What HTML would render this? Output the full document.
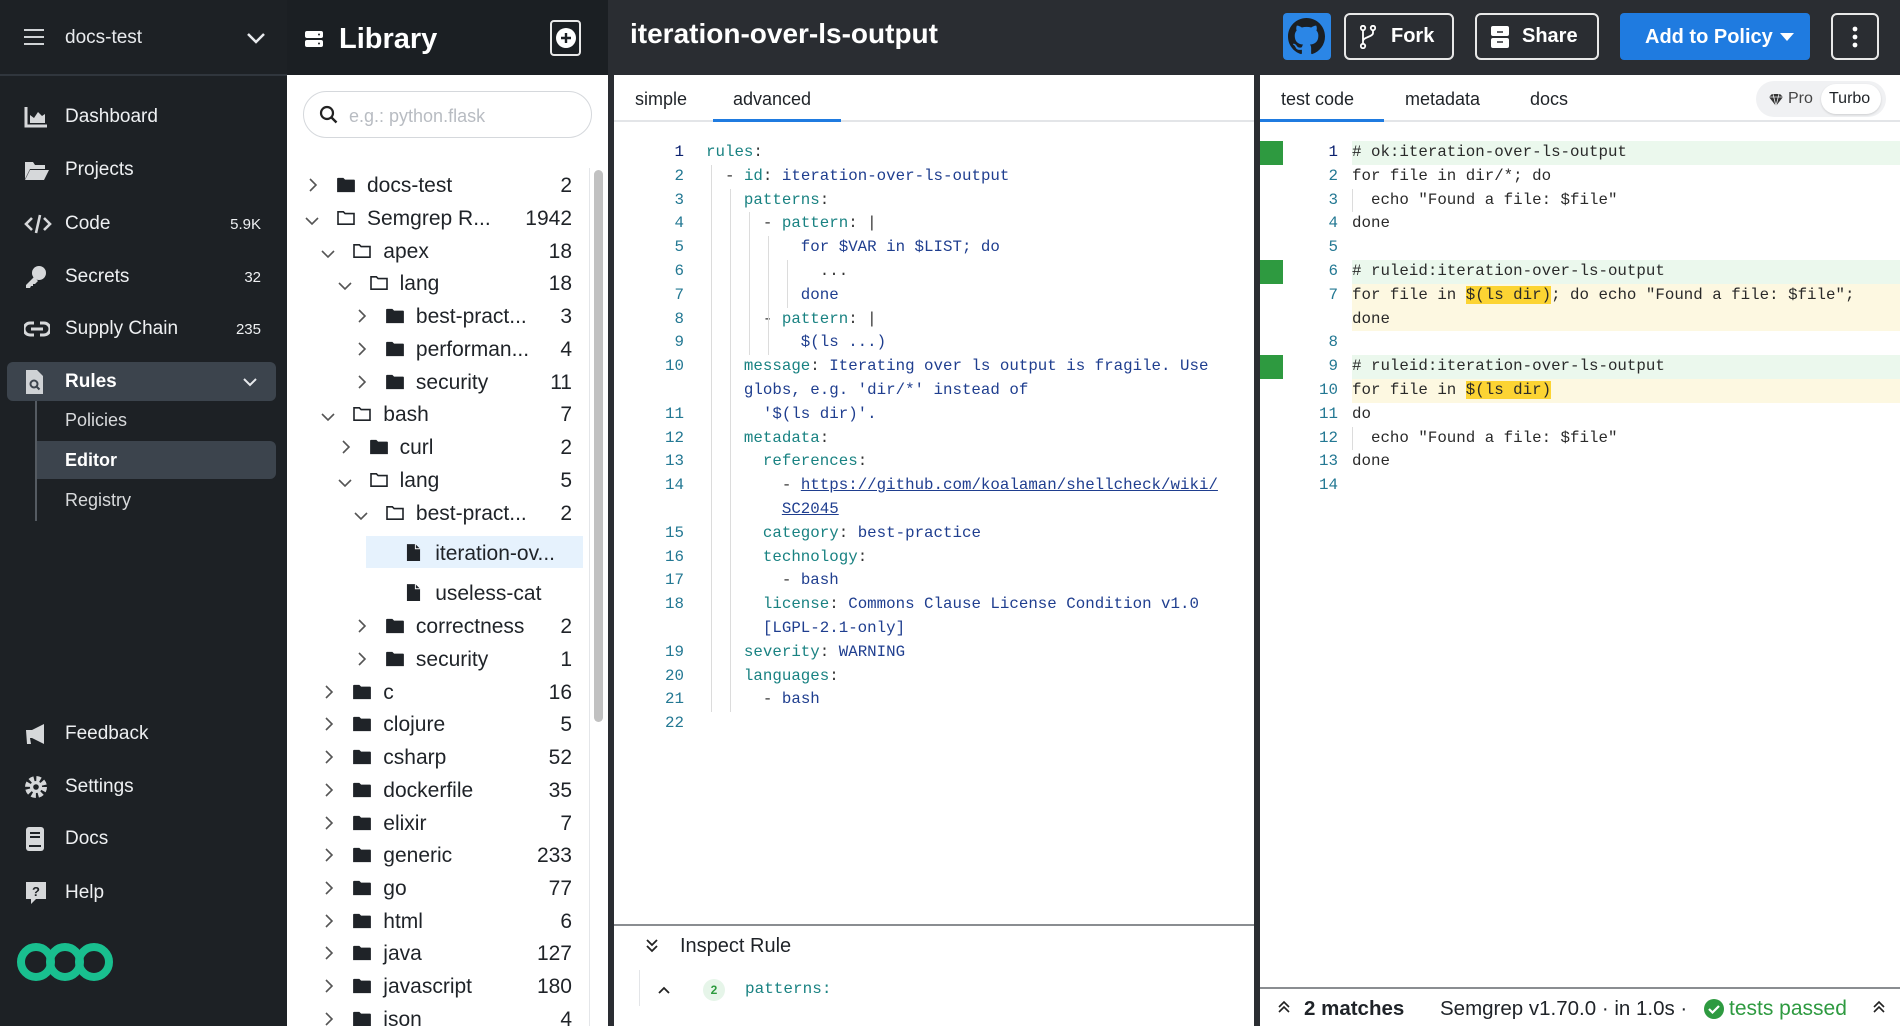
<!DOCTYPE html>
<html><head><meta charset="utf-8">
<style>
*{box-sizing:border-box;margin:0;padding:0}
html{width:1900px;height:1026px;overflow:hidden}
body{width:1900px;height:1026px;overflow:hidden;position:relative;font-family:"Liberation Sans",sans-serif;background:#fff}
.abs{position:absolute}
#side{left:0;top:0;width:287px;height:1026px;background:#1d2125;color:#e8eaed}
.nav{position:absolute;left:0;width:287px;height:40px;display:flex;align-items:center;font-size:19px;color:#eef0f2}
.nav svg{position:absolute;left:24px}
.nav .t{position:absolute;left:65px}
.nav .c{position:absolute;right:26px;font-size:15px}
#lib{left:287px;top:0;width:321px;height:1026px;background:#fff}
#top{left:608px;top:0;width:1292px;height:75px;background:#2a2d32}
.btn{position:absolute;top:13px;height:47px;border:2px solid #e8e8e8;border-radius:6px;color:#fff;font-size:20px;font-weight:bold;display:flex;align-items:center}
.code{font-family:"Liberation Mono",monospace;font-size:15.8px;white-space:pre}
.ln{position:absolute;height:23.8px;line-height:23.8px;width:100%}
.ln .num{position:absolute;text-align:right;width:40px;color:#237893}
.k{color:#198282}.v{color:#1f3e8f}.p{color:#333}
.hl{background:#fcd433}
</style></head><body>

<div id="side" class="abs">
 <div class="abs" style="left:0;top:74px;width:287px;height:2px;background:#30363d"></div>
 <svg class="abs" style="left:23px;top:28px" width="22" height="18" viewBox="0 0 22 18"><path d="M1 2h20M1 9h20M1 16h20" stroke="#d0d3d6" stroke-width="2"/></svg>
 <div class="abs" style="left:65px;top:27px;font-size:19px;color:#e8eaed">docs-test</div>
 <svg class="abs" style="left:246px;top:32px" width="20" height="12" viewBox="0 0 20 12"><path d="M2 2l8 8 8-8" stroke="#e8eaed" stroke-width="2.5" fill="none"/></svg>

 <div class="nav" style="top:97px"><svg width="24" height="22" viewBox="0 0 24 22"><path d="M2 1v19h21" stroke="#d6d8da" stroke-width="3" fill="none"/><path d="M6 17V9l4 3 4-6 4 4 3-2v9z" fill="#d6d8da"/></svg><span class="t">Dashboard</span></div>
 <div class="nav" style="top:150px"><svg width="26" height="22" viewBox="0 0 26 22"><path d="M1 3h8l2 3h10v4H6L1 20z" fill="#d6d8da"/><path d="M6 11h19l-5 10H1z" fill="#d6d8da"/></svg><span class="t">Projects</span></div>
 <div class="nav" style="top:204px"><svg width="28" height="22" viewBox="0 0 28 22"><path d="M8 5L2 11l6 6M20 5l6 6-6 6M16 2l-4 18" stroke="#d6d8da" stroke-width="2.6" fill="none"/></svg><span class="t">Code</span><span class="c">5.9K</span></div>
 <div class="nav" style="top:257px"><svg width="24" height="24" viewBox="0 0 24 24"><circle cx="15" cy="8" r="7" fill="#d6d8da"/><path d="M10 12L2 20v3h4l1-2h2v-2h2l3-3z" fill="#d6d8da"/></svg><span class="t">Secrets</span><span class="c">32</span></div>
 <div class="nav" style="top:309px"><svg width="26" height="16" viewBox="0 0 26 16"><path d="M10 2H6a6 6 0 000 12h4M16 2h4a6 6 0 010 12h-4M7 8h12" stroke="#d6d8da" stroke-width="3" fill="none"/></svg><span class="t">Supply Chain</span><span class="c">235</span></div>
 <div class="abs" style="left:7px;top:362px;width:269px;height:39px;background:#3c444d;border-radius:6px"></div>
 <div class="nav" style="top:362px"><svg width="20" height="26" viewBox="0 0 20 26"><path d="M2 1h11l6 6v18H2z" fill="#cfd2d5"/><circle cx="10" cy="15" r="3.5" stroke="#3c444d" stroke-width="2" fill="none"/><path d="M12.5 17.5l3 3" stroke="#3c444d" stroke-width="2"/></svg><span class="t" style="font-weight:bold;color:#fff">Rules</span></div>
 <svg class="abs" style="left:242px;top:377px" width="16" height="10" viewBox="0 0 16 10"><path d="M2 2l6 6 6-6" stroke="#e8eaed" stroke-width="2" fill="none"/></svg>
 <div class="abs" style="left:35px;top:401px;width:2px;height:120px;background:#555b62"></div>
 <div class="abs" style="left:37px;top:441px;width:239px;height:38px;background:#3c444d;border-radius:0 6px 6px 0"></div>
 <div class="abs" style="left:65px;top:410px;font-size:18px;color:#d8dadc">Policies</div>
 <div class="abs" style="left:65px;top:450px;font-size:18px;color:#fff;font-weight:bold">Editor</div>
 <div class="abs" style="left:65px;top:490px;font-size:18px;color:#d8dadc">Registry</div>

 <div class="nav" style="top:714px"><svg width="24" height="24" viewBox="0 0 24 24"><path d="M2 8h6l12-6v20L8 16H6l1 6H3z" fill="#d6d8da"/></svg><span class="t">Feedback</span></div>
 <div class="nav" style="top:767px"><svg width="24" height="24" viewBox="0 0 24 24"><circle cx="12" cy="12" r="8" fill="none" stroke="#d6d8da" stroke-width="6" stroke-dasharray="4 2.3"/><circle cx="12" cy="12" r="6" fill="#d6d8da"/><circle cx="12" cy="12" r="2.8" fill="#1d2125"/></svg><span class="t">Settings</span></div>
 <div class="nav" style="top:819px"><svg width="22" height="26" viewBox="0 0 22 26"><rect x="2" y="1" width="18" height="24" rx="3" fill="#d6d8da"/><path d="M6 7h10M6 11h10M5 20h12" stroke="#1d2125" stroke-width="2"/></svg><span class="t">Docs</span></div>
 <div class="nav" style="top:873px"><svg width="24" height="26" viewBox="0 0 24 26"><path d="M2 2h20v17H12l-5 5v-5H2z" fill="#d6d8da"/><text x="8" y="16" font-size="13" font-weight="bold" fill="#1d2125" font-family="Liberation Sans">?</text></svg><span class="t">Help</span></div>
 <svg class="abs" style="left:16px;top:940px" width="98" height="44" viewBox="0 0 98 44"><g fill="none" stroke="#19bf8f" stroke-width="8"><circle cx="20" cy="22" r="15"/><circle cx="49" cy="22" r="15"/><circle cx="78" cy="22" r="15"/></g></svg>
</div>

<div id="lib" class="abs">
 <div class="abs" style="left:0;top:0;width:321px;height:75px;background:#1b1f23"></div>
 <svg class="abs" style="left:18px;top:31px" width="18" height="16" viewBox="0 0 18 16"><rect x="0" y="0" width="18" height="7" rx="2" fill="#fff"/><rect x="0" y="9" width="18" height="7" rx="2" fill="#fff"/><circle cx="14" cy="3.5" r="1" fill="#1b1f23"/><circle cx="14" cy="12.5" r="1" fill="#1b1f23"/></svg>
 <div class="abs" style="left:52px;top:23px;font-size:29px;font-weight:bold;color:#fff">Library</div>
 <div class="abs" style="left:263px;top:20px;width:31px;height:36px;border:2px solid #e8e8e8;border-radius:4px"></div>
 <svg class="abs" style="left:268px;top:27px" width="22" height="22" viewBox="0 0 22 22"><circle cx="11" cy="11" r="10" fill="#fff"/><path d="M11 6v10M6 11h10" stroke="#1b1f23" stroke-width="2.4"/></svg>
 <div class="abs" style="left:16px;top:91px;width:289px;height:47px;border:1.5px solid #d5d8dc;border-radius:24px"></div>
 <svg class="abs" style="left:32px;top:105px" width="20" height="20" viewBox="0 0 20 20"><circle cx="8" cy="8" r="6" stroke="#222" stroke-width="2.2" fill="none"/><path d="M12.5 12.5l5 5" stroke="#222" stroke-width="2.4"/></svg>
 <div class="abs" style="left:62px;top:106px;font-size:18px;color:#b8bcc2">e.g.: python.flask</div>
 <div class="abs" style="left:302px;top:168px;width:1px;height:858px;background:#e4e6e9"></div>
 <div class="abs" style="left:307px;top:170px;width:9px;height:552px;background:#c1c1c1;border-radius:5px"></div>
 <div class="abs" style="left:79px;top:536px;width:217px;height:32px;background:#e6f2fd"></div>
</div>
<div id="tree" class="abs" style="left:287px;top:0;width:321px;height:1026px;overflow:hidden">
</div>

<div id="top" class="abs">
 <div class="abs" style="left:22px;top:18px;font-size:28px;font-weight:bold;color:#fff">iteration-over-ls-output</div>
</div>
<div class="abs" style="left:1283px;top:13px;width:48px;height:47px;background:#2b86e6;border-radius:4px"></div>
<svg class="abs" style="left:1288px;top:18px" width="37" height="37" viewBox="0 0 16 16"><path fill="#1b1f23" d="M8 0C3.58 0 0 3.58 0 8c0 3.540 2.29 6.53 5.47 7.59.4.07.55-.17.55-.38 0-.19-.01-.82-.01-1.49-2.01.37-2.530-.49-2.690-.94-.09-.23-.48-.94-.82-1.130-.28-.15-.68-.52-.01-.53.63-.01 1.08.58 1.23.82.72 1.21 1.87.87 2.33.66.07-.52.28-.87.51-1.07-1.78-.2-3.64-.89-3.64-3.950 0-.87.31-1.59.82-2.15-.08-.2-.36-1.02.08-2.12 0 0 .67-.21 2.2.82.64-.18 1.32-.27 2-.27.68 0 1.36.09 2 .27 1.53-1.04 2.2-.82 2.2-.82.44 1.1.16 1.92.08 2.12.51.56.82 1.27.82 2.15 0 3.07-1.87 3.75-3.65 3.95.29.25.54.73.54 1.48 0 1.07-.01 1.93-.01 2.2 0 .21.15.46.55.38A8.013 8.013 0 0016 8c0-4.42-3.58-8-8-8z"/></svg>
<div class="btn" style="left:1344px;width:110px"><svg style="position:absolute;left:14px" width="16" height="24" viewBox="0 0 16 24"><circle cx="3" cy="3" r="2.2" stroke="#fff" stroke-width="1.8" fill="none"/><circle cx="13" cy="3" r="2.2" stroke="#fff" stroke-width="1.8" fill="none"/><circle cx="3" cy="21" r="2.2" stroke="#fff" stroke-width="1.8" fill="none"/><path d="M3 5v14M13 5v3c0 4-10 4-10 8" stroke="#fff" stroke-width="1.8" fill="none"/></svg><span style="position:absolute;left:45px">Fork</span></div>
<div class="btn" style="left:1475px;width:124px"><svg style="position:absolute;left:14px" width="18" height="24" viewBox="0 0 18 24"><rect x="0" y="1" width="18" height="10" rx="2" fill="#fff"/><rect x="0" y="13" width="18" height="10" rx="2" fill="#fff"/><path d="M6 7h6M6 17h6" stroke="#2a2d32" stroke-width="1.6"/></svg><span style="position:absolute;left:45px">Share</span></div>
<div class="abs" style="left:1620px;top:13px;width:190px;height:47px;background:#1f7be0;border-radius:4px;color:#fff;font-size:20px;font-weight:bold"><span style="position:absolute;left:25px;top:13px">Add to Policy</span><svg style="position:absolute;left:160px;top:20px" width="14" height="9" viewBox="0 0 14 9"><path d="M0 0h14L7 8z" fill="#fff"/></svg></div>
<div class="btn" style="left:1831px;width:48px"><svg style="position:absolute;left:19px" width="6" height="22" viewBox="0 0 6 22"><circle cx="3" cy="3" r="2.4" fill="#fff"/><circle cx="3" cy="11" r="2.4" fill="#fff"/><circle cx="3" cy="19" r="2.4" fill="#fff"/></svg></div>

<div class="abs" style="left:608px;top:75px;width:6px;height:951px;background:#2a2d32"></div>
<div class="abs" style="left:1254px;top:75px;width:6px;height:951px;background:#2a2d32"></div>

<div class="abs" style="left:614px;top:75px;width:640px;height:951px;background:#fff;overflow:hidden">
 <div class="abs" style="left:21px;top:14px;font-size:18px;color:#1f2328">simple</div>
 <div class="abs" style="left:119px;top:14px;font-size:18px;color:#1f2328">advanced</div>
 <div class="abs" style="left:0;top:45px;width:640px;height:2px;background:#e3e5e8"></div>
 <div class="abs" style="left:99px;top:44px;width:128px;height:3px;background:#1f7be0"></div>
 <div id="mid" class="abs code" style="left:0;top:66px;width:640px"></div>
 <div class="abs" style="left:0;top:849px;width:640px;height:2px;background:#8a8d91"></div>
 <svg class="abs" style="left:31px;top:863px" width="14" height="16" viewBox="0 0 14 16"><path d="M2 2l5 5 5-5M2 8l5 5 5-5" stroke="#222" stroke-width="1.8" fill="none"/></svg>
 <div class="abs" style="left:66px;top:860px;font-size:20px;color:#1f2328">Inspect Rule</div>
 <div class="abs" style="left:25px;top:895px;width:1px;height:36px;background:#e3e5e8"></div>
 <svg class="abs" style="left:43px;top:911px" width="14" height="9" viewBox="0 0 14 9"><path d="M2 7l5-5 5 5" stroke="#222" stroke-width="1.8" fill="none"/></svg>
 <div class="abs" style="left:89px;top:904px;width:22px;height:22px;border-radius:11px;background:#e6f5e9;color:#2c9a3e;font-size:12px;font-weight:bold;text-align:center;line-height:22px">2</div>
 <div class="abs code" style="left:131px;top:905px;color:#198282;font-size:16px">patterns:</div>
</div>

<div class="abs" style="left:1260px;top:75px;width:640px;height:951px;background:#fff;overflow:hidden">
 <div class="abs" style="left:21px;top:14px;font-size:18px;color:#1f2328">test code</div>
 <div class="abs" style="left:145px;top:14px;font-size:18px;color:#1f2328">metadata</div>
 <div class="abs" style="left:270px;top:14px;font-size:18px;color:#1f2328">docs</div>
 <div class="abs" style="left:0;top:45px;width:640px;height:2px;background:#e3e5e8"></div>
 <div class="abs" style="left:0;top:44px;width:124px;height:3px;background:#1f7be0"></div>
 <div class="abs" style="left:496px;top:6px;width:130px;height:36px;background:#f0f1f3;border-radius:18px"></div>
 <div class="abs" style="left:561px;top:9px;width:60px;height:30px;background:#fff;border-radius:15px;box-shadow:0 1px 2px rgba(0,0,0,.15)"></div>
 <svg class="abs" style="left:508px;top:18px" width="16" height="14" viewBox="0 0 16 14"><path d="M1 4l3-3h8l3 3-7 9z" fill="#333"/><path d="M1 4h14M5 1l3 12 3-12" stroke="#f0f1f3" stroke-width="0.8" fill="none"/></svg>
 <div class="abs" style="left:528px;top:15px;font-size:16px;color:#444">Pro</div>
 <div class="abs" style="left:569px;top:15px;font-size:16px;color:#1f2328">Turbo</div>
 <div id="rt" class="abs code" style="left:0;top:66px;width:640px"></div>
 <div class="abs" style="left:0;top:912px;width:640px;height:2px;background:#8a8d91"></div>
 <svg class="abs" style="left:17px;top:925px" width="14" height="14" viewBox="0 0 14 14"><path d="M2 7l5-5 5 5M2 12l5-5 5 5" stroke="#222" stroke-width="1.6" fill="none"/></svg>
 <div class="abs" style="left:44px;top:922px;font-size:20.5px;font-weight:bold;color:#1f2328">2 matches</div>
 <div class="abs" style="left:180px;top:922px;font-size:20.5px;color:#1f2328">Semgrep v1.70.0 · in 1.0s ·</div>
 <svg class="abs" style="left:444px;top:924px" width="20" height="20" viewBox="0 0 20 20"><circle cx="10" cy="10" r="10" fill="#2e9a40"/><path d="M5 10l3.5 3.5L15 7" stroke="#fff" stroke-width="2.2" fill="none"/></svg>
 <div class="abs" style="left:469px;top:922px;font-size:21px;color:#2e9a40">tests passed</div>
 <svg class="abs" style="left:612px;top:925px" width="14" height="14" viewBox="0 0 14 14"><path d="M2 7l5-5 5 5M2 12l5-5 5 5" stroke="#222" stroke-width="1.6" fill="none"/></svg>
</div>

<script>
const FF='<svg width="18" height="16" viewBox="0 0 20 18"><path d="M0 2a1 1 0 011-1h6l2 2h10a1 1 0 011 1v13H0z" fill="#1f2328"/></svg>';
const FO='<svg width="18" height="16" viewBox="0 0 20 18"><path d="M1 2h6l2 2h10v12H1z" stroke="#1f2328" stroke-width="1.8" fill="none"/></svg>';
const FI='<svg width="15" height="19" viewBox="0 0 16 20"><path d="M1 1h9l5 5v13H1z" fill="#1f2328"/><path d="M10 1v5h5" stroke="#fff" stroke-width="1" fill="none"/></svg>';
const CR='<svg width="10" height="16" viewBox="0 0 10 16"><path d="M2 2l6 6-6 6" stroke="#555" stroke-width="1.6" fill="none"/></svg>';
const CD='<svg width="16" height="10" viewBox="0 0 16 10"><path d="M2 2l6 6 6-6" stroke="#555" stroke-width="1.6" fill="none"/></svg>';
const rows=[
[184,0,'c','f','docs-test','2'],[217,0,'o','o','Semgrep R...','1942'],[250,1,'o','o','apex','18'],[282,2,'o','o','lang','18'],
[315,3,'c','f','best-pract...','3'],[348,3,'c','f','performan...','4'],[381,3,'c','f','security','11'],
[413,1,'o','o','bash','7'],[446,2,'c','f','curl','2'],[479,2,'o','o','lang','5'],[512,3,'o','o','best-pract...','2'],
[552,4,'n','i','iteration-ov...',''],[592,4,'n','i','useless-cat',''],[625,3,'c','f','correctness','2'],[658,3,'c','f','security','1'],
[691,1,'c','f','c','16'],[723,1,'c','f','clojure','5'],[756,1,'c','f','csharp','52'],[789,1,'c','f','dockerfile','35'],
[822,1,'c','f','elixir','7'],[854,1,'c','f','generic','233'],[887,1,'c','f','go','77'],[920,1,'c','f','html','6'],
[952,1,'c','f','java','127'],[985,1,'c','f','javascript','180'],[1018,1,'c','f','json','4']];
let h='';
for(const [y0,l,ch,ic,t,c] of rows){
 const y=y0+1;
 const x0=26+l*16.3;
 if(ch!=='n') h+=`<div class="abs" style="left:${ch==='c'?x0-5:x0-9}px;top:${y-(ch==='c'?8:5)}px">${ch==='c'?CR:CD}</div>`;
 const ix=x0+24;
 h+=`<div class="abs" style="left:${ic==='i'?ix+4:ix}px;top:${y-(ic==='i'?10:8)}px">${ic==='f'?FF:ic==='o'?FO:FI}</div>`;
 h+=`<div class="abs" style="left:${x0+(ic==='i'?57:54)}px;top:${y-11}px;font-size:21px;color:#1f2328;white-space:nowrap">${t}</div>`;
 if(c) h+=`<div class="abs" style="right:36px;top:${y-11}px;font-size:21px;color:#1f2328">${c}</div>`;
}
document.getElementById('tree').innerHTML=h;

const LH=23.8;
const M=[
['1','<span class="k">rules</span><span class="p">:</span>'],
['2','  <span class="p">-</span> <span class="k">id</span><span class="p">:</span> <span class="v">iteration-over-ls-output</span>'],
['3','    <span class="k">patterns</span><span class="p">:</span>'],
['4','      <span class="p">-</span> <span class="k">pattern</span><span class="p">: |</span>'],
['5','          <span class="v">for $VAR in $LIST; do</span>'],
['6','            <span class="p">...</span>'],
['7','          <span class="v">done</span>'],
['8','      <span class="p">-</span> <span class="k">pattern</span><span class="p">: |</span>'],
['9','          <span class="v">$(ls ...)</span>'],
['10','    <span class="k">message</span><span class="p">:</span> <span class="v">Iterating over ls output is fragile. Use</span>'],
['','    <span class="v">globs, e.g. \'dir/*\' instead of</span>'],
['11','      <span class="v">\'$(ls dir)\'.</span>'],
['12','    <span class="k">metadata</span><span class="p">:</span>'],
['13','      <span class="k">references</span><span class="p">:</span>'],
['14','        <span class="p">-</span> <span class="v" style="text-decoration:underline">https://github.com/koalaman/shellcheck/wiki/</span>'],
['','        <span class="v" style="text-decoration:underline">SC2045</span>'],
['15','      <span class="k">category</span><span class="p">:</span> <span class="v">best-practice</span>'],
['16','      <span class="k">technology</span><span class="p">:</span>'],
['17','        <span class="p">-</span> <span class="v">bash</span>'],
['18','      <span class="k">license</span><span class="p">:</span> <span class="v">Commons Clause License Condition v1.0</span>'],
['','      <span class="v">[LGPL-2.1-only]</span>'],
['19','    <span class="k">severity</span><span class="p">:</span> <span class="v">WARNING</span>'],
['20','    <span class="k">languages</span><span class="p">:</span>'],
['21','      <span class="p">-</span> <span class="v">bash</span>'],
['22','']];
h='';
M.forEach((r,i)=>{h+=`<div class="ln" style="top:${i*LH}px"><span class="num" style="left:30px;${r[0]==='1'?'color:#0b216f':''}">${r[0]}</span><span style="position:absolute;left:92px">${r[1]}</span></div>`});
[[97,1,23],[116,2,23],[135,3,8],[154,4,8],[173,5,6]].forEach(([x,a,b])=>{h+=`<div class="abs" style="left:${x}px;top:${a*LH}px;width:1px;height:${(b-a+1)*LH}px;background:#dcdcdc"></div>`});
document.getElementById('mid').innerHTML=h;
const R=[
['1','# ok:iteration-over-ls-output','g'],['2','for file in dir/*; do',''],['3','  echo "Found a file: $file"',''],['4','done',''],['5','',''],
['6','# ruleid:iteration-over-ls-output','g'],['7','for file in <span class="hl">$(ls dir)</span>; do echo "Found a file: $file";','y'],['','done','y'],['8','',''],
['9','# ruleid:iteration-over-ls-output','g'],['10','for file in <span class="hl">$(ls dir)</span>','y'],['11','do',''],['12','  echo "Found a file: $file"',''],['13','done',''],['14','','']];
h='';
R.forEach((r,i)=>{
 const bg=r[2]==='g'?'#ebf8ed':r[2]==='y'?'#fdf8e1':'';
 if(r[2]==='g') h+=`<div class="abs" style="left:0;top:${i*LH}px;width:23px;height:${LH}px;background:#2e9a40"></div>`;
 if(bg) h+=`<div class="abs" style="left:92px;top:${i*LH}px;width:548px;height:${LH}px;background:${bg}"></div>`;
 h+=`<div class="ln" style="top:${i*LH}px"><span class="num" style="left:38px;${r[0]==='1'?'color:#0b216f':''}">${r[0]}</span><span style="position:absolute;left:92px;color:#2a2a2a">${r[1]}</span></div>`;
});
h+=`<div class="abs" style="left:92px;top:${2*LH}px;width:1px;height:${LH}px;background:#dcdcdc"></div><div class="abs" style="left:92px;top:${12*LH}px;width:1px;height:${LH}px;background:#dcdcdc"></div>`;
document.getElementById('rt').innerHTML=h;
</script>
</body></html>
